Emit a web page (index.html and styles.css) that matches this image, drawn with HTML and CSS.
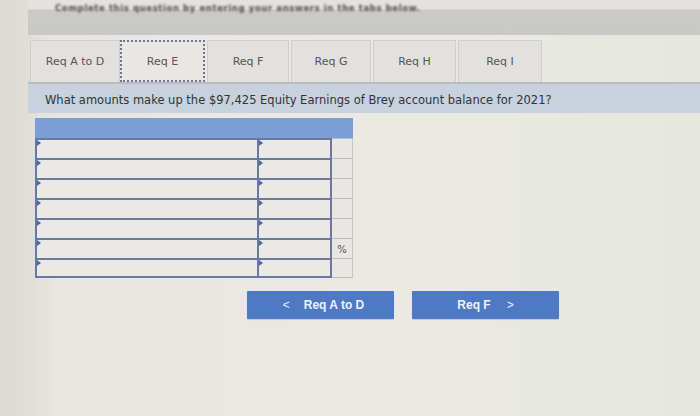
FILE: index.html
```html
<!DOCTYPE html>
<html>
<head>
<meta charset="utf-8">
<link rel="stylesheet" href="styles.css">
</head>
<body>
<div class="screen">
  <div class="page">
    <div class="instr"><p>Complete this question by entering your answers in the tabs below.</p></div>
    <div class="tabs">
      <div class="tab w90">Req A to D</div>
      <div class="tab w85 active">Req E</div>
      <div class="tab w82">Req F</div>
      <div class="tab w80">Req G</div>
      <div class="tab w83">Req H</div>
      <div class="tab w84">Req I</div>
    </div>
    <div class="question">What amounts make up the $97,425 Equity Earnings of Brey account balance for 2021?</div>
    <div class="grid">
      <div class="head"></div>
      <div class="row"><div class="c1"><i class="flag"></i></div><div class="c2"><i class="flag"></i></div><div class="c3"></div></div>
      <div class="row"><div class="c1"><i class="flag"></i></div><div class="c2"><i class="flag"></i></div><div class="c3"></div></div>
      <div class="row"><div class="c1"><i class="flag"></i></div><div class="c2"><i class="flag"></i></div><div class="c3"></div></div>
      <div class="row"><div class="c1"><i class="flag"></i></div><div class="c2"><i class="flag"></i></div><div class="c3"></div></div>
      <div class="row"><div class="c1"><i class="flag"></i></div><div class="c2"><i class="flag"></i></div><div class="c3"></div></div>
      <div class="row"><div class="c1"><i class="flag"></i></div><div class="c2"><i class="flag"></i></div><div class="c3">%</div></div>
      <div class="row last"><div class="c1"><i class="flag"></i></div><div class="c2"><i class="flag"></i></div><div class="c3"></div></div>
    </div>
    <div class="nav">
      <div class="btn prev"><span class="chev">&lt;</span><span>Req A to D</span></div>
      <div class="btn next"><span>Req F</span><span class="chev">&gt;</span></div>
    </div>
  </div>
</div>
</body>
</html>
```
FILE: styles.css
```css
html, body {
  margin: 0;
  padding: 0;
}
body {
  width: 700px;
  height: 416px;
  overflow: hidden;
  background: linear-gradient(90deg, #dcdad5 0px, #e0ded9 28px, #e9e7e2 60px, #ebe9e4 400px, #e6e7e0 700px);
  font-family: "DejaVu Sans", Verdana, sans-serif;
}
.screen {
  height: 416px;
}
.page {
  padding-left: 28px;
  display: flex;
  flex-direction: column;
}
.instr {
  height: 35px;
  background: linear-gradient(180deg, #e4e2de 0px, #e4e2de 9px, #cbcac8 10px, #c8c8c6 35px);
}
.instr p {
  margin: 0;
  padding-top: 3px;
  padding-left: 27px;
  font-size: 8.5px;
  line-height: 10px;
  font-weight: bold;
  color: #4a4a4a;
  filter: blur(0.9px);
  letter-spacing: 0.6px;
}
.tabs {
  display: flex;
  gap: 2px;
  margin-top: 5px;
  padding-left: 2px;
  height: 42px;
}
.tab {
  box-sizing: border-box;
  height: 42px;
  background: #e2e1de;
  border: 1px solid #cfcecb;
  border-bottom: none;
  font-size: 11px;
  color: #555;
  display: flex;
  align-items: center;
  justify-content: center;
}
.w90 { width: 90px; }
.w85 { width: 85px; border: 2px dotted #6b7294; background: #e9e7e3; margin-left: -2px; }
.w82 { width: 82px; }
.w80 { width: 80px; }
.w83 { width: 83px; }
.w84 { width: 84px; }
.question {
  box-sizing: border-box;
  height: 31px;
  background: #c8d2dc;
  border-top: 2px solid #b8bcc3;
  padding-left: 17px;
  padding-top: 9px;
  font-size: 11.5px;
  color: #333;
}
.grid {
  margin-top: 5px;
  margin-left: 7px;
  width: 318px;
  display: flex;
  flex-direction: column;
}
.head {
  height: 20px;
  background: #7c9ed6;
}
.row {
  display: flex;
  height: 20px;
}
.row > div {
  box-sizing: border-box;
  height: 20px;
  position: relative;
}
.c1 {
  width: 222px;
  border-left: 2px solid #6878a2;
  border-top: 2px solid #6878a2;
  background: #ebe9e5;
}
.c2 {
  width: 75px;
  border-left: 2px solid #6878a2;
  border-top: 2px solid #6878a2;
  border-right: 2px solid #6878a2;
  background: #ebe9e5;
}
.c3 {
  width: 21px;
  border-top: 1px solid #bdbcba;
  border-right: 1px solid #c5c4c1;
  background: #e9e7e3;
  font-size: 10px;
  color: #555;
  display: flex;
  align-items: center;
  justify-content: center;
  padding-top: 2px;
}
.row.last .c1, .row.last .c2 {
  border-bottom: 2px solid #6878a2;
}
.row.last .c3 {
  border-bottom: 1px solid #bdbcba;
}
.flag {
  position: absolute;
  left: 0;
  top: 0;
  width: 0;
  height: 0;
  border-top: 3px solid transparent;
  border-bottom: 3px solid transparent;
  border-left: 4px solid #4a64a8;
}
.nav {
  display: flex;
  gap: 18px;
  margin-top: 13px;
  padding-left: 219px;
}
.btn {
  box-sizing: border-box;
  width: 147px;
  height: 28px;
  background: #4e79c4;
  border-radius: 1px;
  box-shadow: 0 1px 1px rgba(0,0,0,0.15);
  color: #eef2fa;
  font-family: "Liberation Sans", Arial, sans-serif;
  font-weight: bold;
  font-size: 12px;
  display: flex;
  align-items: center;
  justify-content: center;
  gap: 14px;
}
.prev { padding-left: 6px; }
.next { padding-left: 0; gap: 16px; }
.chev {
  font-weight: normal;
  font-size: 12px;
}
```
